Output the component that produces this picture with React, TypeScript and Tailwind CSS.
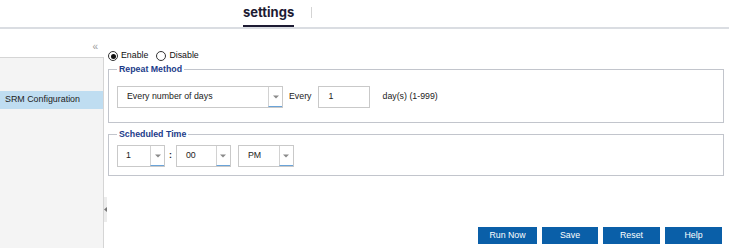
import React from 'react';

const font = { fontFamily: '"Liberation Sans", Arial, sans-serif' };

function Select({ value, width, textPad = 9 }: { value: string; width: number; textPad?: number }) {
    return (
        <div className="flex h-[22px] border border-[#c9c9c9] bg-white" style={{ width }}>
            <span className="flex flex-1 items-center text-[8.8px] text-[#222]" style={{ paddingLeft: textPad }}>
                {value}
            </span>
            <span className="flex w-[14px] items-center justify-center border-l border-[#d2d2d2] border-b-[1.5px] border-b-[#6aa3d8]">
                <svg width="6" height="4" viewBox="0 0 6 4">
                    <path d="M0 0.5 L6 0.5 L3 3.5 Z" fill="#8a8a8a" />
                </svg>
            </span>
        </div>
    );
}

function Radio({ checked, label }: { checked?: boolean; label: string }) {
    return (
        <label className="flex items-center gap-[3px] text-[8.8px] text-[#111]">
            <span className="flex h-[10px] w-[10px] items-center justify-center rounded-full border border-[#333] bg-white">
                {checked && <span className="h-[5px] w-[5px] rounded-full bg-[#111]" />}
            </span>
            {label}
        </label>
    );
}

export default function App() {
    const buttons = [
        { name: 'Run Now', w: 'w-[59px]' },
        { name: 'Save', w: 'w-[56px]' },
        { name: 'Reset', w: 'w-[57px]' },
        { name: 'Help', w: 'w-[57px]' },
    ];

    return (
        <div className="flex h-[248px] w-[729px] flex-col overflow-hidden bg-white" style={font}>
            {/* Top tab bar */}
            <header className="flex h-[29px] shrink-0 items-stretch border-b-2 border-[#dadde2] pl-[243px]">
                <div
                    className="flex items-center border-b-2 border-[#1d1b33] pt-[1px] text-[13px] font-bold text-[#1d1b33]"
                    style={{ fontFamily: 'Inter, "Liberation Sans", sans-serif' }}
                >
                    settings
                </div>
                <div className="ml-[17px] mt-[7px] h-[11px] w-px bg-[#d4d4d4]" />
            </header>

            <div className="flex min-h-0 flex-1">
                {/* Sidebar */}
                <aside className="flex w-[104px] shrink-0 flex-col">
                    <div className="flex h-[28px] items-start justify-end pr-[6px] pt-[13px] text-[10px] leading-none text-[#9a9a9a]">
                        «
                    </div>
                    <div className="flex-1 border-r border-t border-[#d5d5d5] bg-[#f4f4f4] pt-[33px]">
                        <div className="flex h-[18px] items-center bg-[#bfddf1] pl-[5px] text-[8.9px] text-[#222]">
                            SRM Configuration
                        </div>
                    </div>
                </aside>

                {/* Collapse handle */}
                <div className="w-[4px] shrink-0 pt-[168px]">
                    <div className="flex h-[25px] w-[3px] items-center bg-[#ececec]">
                        <svg width="3" height="5" viewBox="0 0 3 5">
                            <path d="M3 0 L0 2.5 L3 5 Z" fill="#777" />
                        </svg>
                    </div>
                </div>

                {/* Content */}
                <main className="flex min-w-0 flex-1 flex-col pr-[5px] pt-[22px]">
                    <div className="flex h-[10px] items-center gap-[8px]">
                        <Radio checked label="Enable" />
                        <Radio label="Disable" />
                    </div>

                    <fieldset className="mt-[3px] h-[59px] border border-[#c2c5cc] pl-[8px]">
                        <legend className="ml-[0px] px-[2px] text-[8.8px] font-bold leading-[11px] text-[#1c3c8a]">
                            Repeat Method
                        </legend>
                        <div className="mt-[11px] flex items-center">
                            <Select value="Every number of days" width={166} />
                            <span className="ml-[6px] text-[8.8px] text-[#222]">Every</span>
                            <div className="ml-[6px] flex h-[22px] w-[52px] items-center border border-[#c9c9c9] pl-[10px] text-[8.8px] text-[#222]">
                                1
                            </div>
                            <span className="ml-[13px] text-[8.8px] text-[#222]">day(s) (1-999)</span>
                        </div>
                    </fieldset>

                    <fieldset className="mt-[6px] h-[47px] border border-[#c2c5cc] pl-[8px]">
                        <legend className="ml-[0px] px-[2px] text-[8.8px] font-bold leading-[11px] text-[#1c3c8a]">
                            Scheduled Time
                        </legend>
                        <div className="mt-[5px] flex items-center">
                            <Select value="1" width={48} textPad={8} />
                            <span className="mx-[4px] text-[8.8px] font-bold text-[#222]">:</span>
                            <Select value="00" width={55} textPad={9} />
                            <span className="w-[7px]" />
                            <Select value="PM" width={56} textPad={9} />
                        </div>
                    </fieldset>

                    <div className="mt-auto mb-[4px] flex justify-end gap-[5px] pr-[2px]">
                        {buttons.map((b) => (
                            <button
                                key={b.name}
                                type="button"
                                className={`${b.w} h-[17px] bg-[#0a5fa8] text-[8.8px] text-white`}
                            >
                                {b.name}
                            </button>
                        ))}
                    </div>
                </main>
            </div>
        </div>
    );
}
